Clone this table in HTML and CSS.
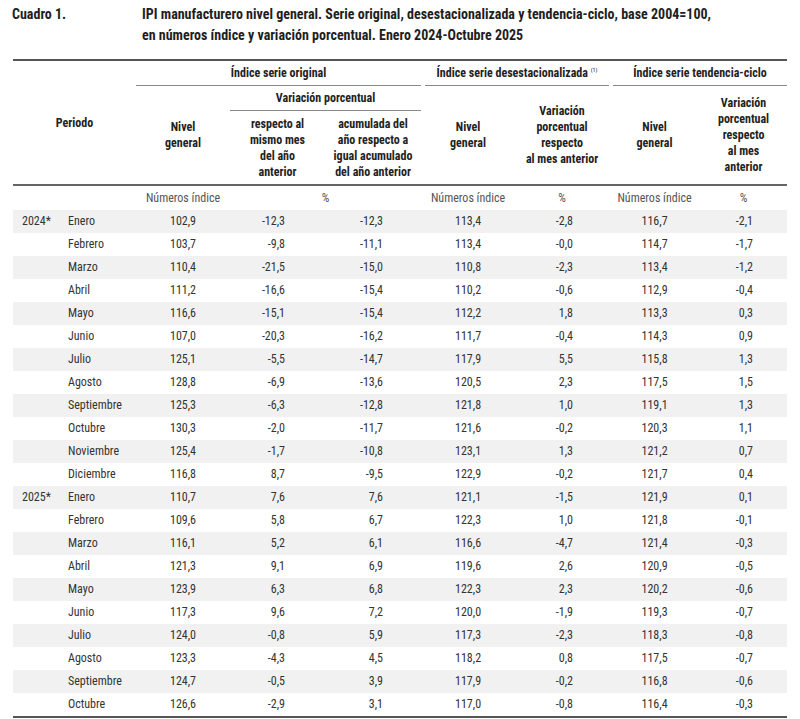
FILE: index.html
```html
<!DOCTYPE html>
<html lang="es">
<head>
<meta charset="utf-8">
<title>Cuadro 1</title>
<link rel="stylesheet" href="styles.css">
</head>
<body>
<div class="page">
  <div class="caption">
    <div class="cap-num">Cuadro 1.</div>
    <div class="cap-text">IPI manufacturero nivel general. Serie original, desestacionalizada y tendencia-ciclo, base 2004=100,<br>en números índice y variación porcentual. Enero 2024-Octubre 2025</div>
  </div>
  <table class="tbl">
    <colgroup>
      <col class="c-year"><col class="c-month"><col class="c1"><col class="c2"><col class="c3"><col class="c4"><col class="c5"><col class="c6"><col class="c7">
    </colgroup>
    <thead>
      <tr class="h1">
        <th colspan="2" rowspan="3" class="periodo">Periodo</th>
        <th colspan="3"><div class="grp">Índice serie original</div></th>
        <th colspan="2"><div class="grp gap">Índice serie desestacionalizada <sup>(1)</sup></div></th>
        <th colspan="2"><div class="grp gap">Índice serie tendencia-ciclo</div></th>
      </tr>
      <tr class="h2">
        <th rowspan="2">Nivel<br>general</th>
        <th colspan="2"><div class="grp">Variación porcentual</div></th>
        <th rowspan="2">Nivel<br>general</th>
        <th rowspan="2">Variación<br>porcentual<br>respecto<br>al mes anterior</th>
        <th rowspan="2">Nivel<br>general</th>
        <th rowspan="2">Variación<br>porcentual<br>respecto<br>al mes<br>anterior</th>
      </tr>
      <tr class="h3">
        <th>respecto al<br>mismo mes<br>del año<br>anterior</th>
        <th>acumulada del<br>año respecto a<br>igual acumulado<br>del año anterior</th>
      </tr>
    </thead>
    <tbody>
      <tr class="units">
        <td></td><td></td><td class="ctr">Números índice</td><td colspan="2" class="ctr">%</td><td class="ctr">Números índice</td><td class="ctr">%</td><td class="ctr">Números índice</td><td class="ctr">%</td>
      </tr>
      <tr><td class="yr">2024*</td><td class="mo">Enero</td><td class="ctr">102,9</td><td class="n2">-12,3</td><td class="n3">-12,3</td><td class="ctr">113,4</td><td class="n5">-2,8</td><td class="ctr">116,7</td><td class="n7">-2,1</td></tr>
      <tr><td class="yr"></td><td class="mo">Febrero</td><td class="ctr">103,7</td><td class="n2">-9,8</td><td class="n3">-11,1</td><td class="ctr">113,4</td><td class="n5">-0,0</td><td class="ctr">114,7</td><td class="n7">-1,7</td></tr>
      <tr><td class="yr"></td><td class="mo">Marzo</td><td class="ctr">110,4</td><td class="n2">-21,5</td><td class="n3">-15,0</td><td class="ctr">110,8</td><td class="n5">-2,3</td><td class="ctr">113,4</td><td class="n7">-1,2</td></tr>
      <tr><td class="yr"></td><td class="mo">Abril</td><td class="ctr">111,2</td><td class="n2">-16,6</td><td class="n3">-15,4</td><td class="ctr">110,2</td><td class="n5">-0,6</td><td class="ctr">112,9</td><td class="n7">-0,4</td></tr>
      <tr><td class="yr"></td><td class="mo">Mayo</td><td class="ctr">116,6</td><td class="n2">-15,1</td><td class="n3">-15,4</td><td class="ctr">112,2</td><td class="n5">1,8</td><td class="ctr">113,3</td><td class="n7">0,3</td></tr>
      <tr><td class="yr"></td><td class="mo">Junio</td><td class="ctr">107,0</td><td class="n2">-20,3</td><td class="n3">-16,2</td><td class="ctr">111,7</td><td class="n5">-0,4</td><td class="ctr">114,3</td><td class="n7">0,9</td></tr>
      <tr><td class="yr"></td><td class="mo">Julio</td><td class="ctr">125,1</td><td class="n2">-5,5</td><td class="n3">-14,7</td><td class="ctr">117,9</td><td class="n5">5,5</td><td class="ctr">115,8</td><td class="n7">1,3</td></tr>
      <tr><td class="yr"></td><td class="mo">Agosto</td><td class="ctr">128,8</td><td class="n2">-6,9</td><td class="n3">-13,6</td><td class="ctr">120,5</td><td class="n5">2,3</td><td class="ctr">117,5</td><td class="n7">1,5</td></tr>
      <tr><td class="yr"></td><td class="mo">Septiembre</td><td class="ctr">125,3</td><td class="n2">-6,3</td><td class="n3">-12,8</td><td class="ctr">121,8</td><td class="n5">1,0</td><td class="ctr">119,1</td><td class="n7">1,3</td></tr>
      <tr><td class="yr"></td><td class="mo">Octubre</td><td class="ctr">130,3</td><td class="n2">-2,0</td><td class="n3">-11,7</td><td class="ctr">121,6</td><td class="n5">-0,2</td><td class="ctr">120,3</td><td class="n7">1,1</td></tr>
      <tr><td class="yr"></td><td class="mo">Noviembre</td><td class="ctr">125,4</td><td class="n2">-1,7</td><td class="n3">-10,8</td><td class="ctr">123,1</td><td class="n5">1,3</td><td class="ctr">121,2</td><td class="n7">0,7</td></tr>
      <tr><td class="yr"></td><td class="mo">Diciembre</td><td class="ctr">116,8</td><td class="n2">8,7</td><td class="n3">-9,5</td><td class="ctr">122,9</td><td class="n5">-0,2</td><td class="ctr">121,7</td><td class="n7">0,4</td></tr>
      <tr><td class="yr">2025*</td><td class="mo">Enero</td><td class="ctr">110,7</td><td class="n2">7,6</td><td class="n3">7,6</td><td class="ctr">121,1</td><td class="n5">-1,5</td><td class="ctr">121,9</td><td class="n7">0,1</td></tr>
      <tr><td class="yr"></td><td class="mo">Febrero</td><td class="ctr">109,6</td><td class="n2">5,8</td><td class="n3">6,7</td><td class="ctr">122,3</td><td class="n5">1,0</td><td class="ctr">121,8</td><td class="n7">-0,1</td></tr>
      <tr><td class="yr"></td><td class="mo">Marzo</td><td class="ctr">116,1</td><td class="n2">5,2</td><td class="n3">6,1</td><td class="ctr">116,6</td><td class="n5">-4,7</td><td class="ctr">121,4</td><td class="n7">-0,3</td></tr>
      <tr><td class="yr"></td><td class="mo">Abril</td><td class="ctr">121,3</td><td class="n2">9,1</td><td class="n3">6,9</td><td class="ctr">119,6</td><td class="n5">2,6</td><td class="ctr">120,9</td><td class="n7">-0,5</td></tr>
      <tr><td class="yr"></td><td class="mo">Mayo</td><td class="ctr">123,9</td><td class="n2">6,3</td><td class="n3">6,8</td><td class="ctr">122,3</td><td class="n5">2,3</td><td class="ctr">120,2</td><td class="n7">-0,6</td></tr>
      <tr><td class="yr"></td><td class="mo">Junio</td><td class="ctr">117,3</td><td class="n2">9,6</td><td class="n3">7,2</td><td class="ctr">120,0</td><td class="n5">-1,9</td><td class="ctr">119,3</td><td class="n7">-0,7</td></tr>
      <tr><td class="yr"></td><td class="mo">Julio</td><td class="ctr">124,0</td><td class="n2">-0,8</td><td class="n3">5,9</td><td class="ctr">117,3</td><td class="n5">-2,3</td><td class="ctr">118,3</td><td class="n7">-0,8</td></tr>
      <tr><td class="yr"></td><td class="mo">Agosto</td><td class="ctr">123,3</td><td class="n2">-4,3</td><td class="n3">4,5</td><td class="ctr">118,2</td><td class="n5">0,8</td><td class="ctr">117,5</td><td class="n7">-0,7</td></tr>
      <tr><td class="yr"></td><td class="mo">Septiembre</td><td class="ctr">124,7</td><td class="n2">-0,5</td><td class="n3">3,9</td><td class="ctr">117,9</td><td class="n5">-0,2</td><td class="ctr">116,8</td><td class="n7">-0,6</td></tr>
      <tr><td class="yr"></td><td class="mo">Octubre</td><td class="ctr">126,6</td><td class="n2">-2,9</td><td class="n3">3,1</td><td class="ctr">117,0</td><td class="n5">-0,8</td><td class="ctr">116,4</td><td class="n7">-0,3</td></tr>
    </tbody>
  </table>
</div>
</body>
</html>
```
FILE: styles.css
```css
html, body {
  margin: 0;
  padding: 0;
  background: #fff;
}
body {
  font-family: "Liberation Sans Narrow", "Arial Narrow", "Roboto Condensed", "Liberation Sans", sans-serif;
  color: #222;
}
.page {
  padding: 4px 13px 0 13px;
}
.caption {
  display: flex;
  font-weight: bold;
  font-size: 14px;
  line-height: 21px;
  color: #1e1e1e;
}
.cap-num {
  width: 130px;
  margin-left: -1px;
}
.cap-text {
  flex: 1;
}
.tbl {
  margin-top: 13px;
  width: 774px;
  table-layout: fixed;
  border-collapse: collapse;
  border-top: 2px solid #555;
  border-bottom: 2px solid #555;
  font-size: 12px;
}
.c-year { width: 47px; }
.c-month { width: 76px; }
.c1 { width: 94px; }
.c2 { width: 95px; }
.c3 { width: 96px; }
.c4 { width: 94px; }
.c5 { width: 94px; }
.c6 { width: 91px; }
.c7 { width: 87px; }

.tbl th {
  font-weight: bold;
  line-height: 16px;
  text-align: center;
  vertical-align: middle;
  padding: 0;
  color: #222;
}
.tbl thead tr.h3 th,
.tbl th.periodo,
.tbl thead tr.h2 th[rowspan] {
  border-bottom: 2px solid #666;
}
.tbl tr.h1 { height: 25px; }
.tbl tr.h2 { height: 24px; }
.tbl tr.h3 { height: 74px; }
.grp {
  border-bottom: 1px solid #888;
  padding: 4px 0;
  line-height: 16px;
}
.grp.gap {
  margin-left: 4px;
}
sup {
  font-size: 6px;
  font-weight: normal;
  vertical-align: 5px;
  line-height: 0;
}
.tbl td {
  height: 23px;
  padding: 0;
  line-height: 23px;
  color: #333;
  white-space: nowrap;
}
.tbl tbody tr:nth-child(even) td {
  background: #f1f1f1;
}
.tbl tr.units td {
  color: #555;
  height: 24px;
}
.ctr { text-align: center; }
.yr { padding-left: 9px !important; }
.mo { padding-left: 8px !important; }
.n2 { text-align: right; padding-right: 40px !important; }
.n3 { text-align: right; padding-right: 38px !important; }
.n5 { text-align: right; padding-right: 36px !important; }
.n7 { text-align: right; padding-right: 34px !important; }
```
